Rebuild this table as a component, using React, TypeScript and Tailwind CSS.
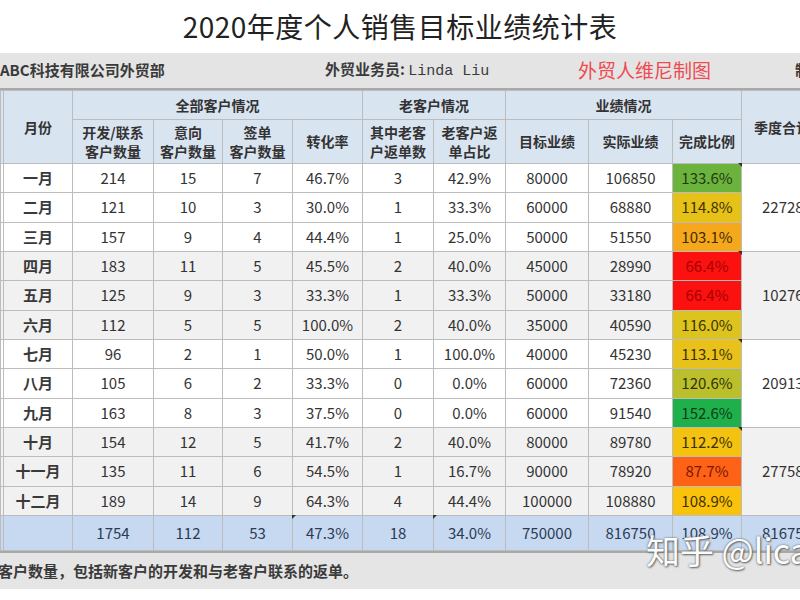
import React from 'react';

type Row = {
  month: string;
  dev: number;
  intent: number;
  signed: number;
  rate: string;
  back: number;
  backRate: string;
  target: number;
  actual: number;
  done: string;
  doneBg: string;
  doneText: string;
};

const ROWS: Row[] = [
  { month: '一月', dev: 214, intent: 15, signed: 7, rate: '46.7%', back: 3, backRate: '42.9%', target: 80000, actual: 106850, done: '133.6%', doneBg: 'bg-[#6cb33e]', doneText: 'text-[#1f3a10]' },
  { month: '二月', dev: 121, intent: 10, signed: 3, rate: '30.0%', back: 1, backRate: '33.3%', target: 60000, actual: 68880, done: '114.8%', doneBg: 'bg-[#e6c118]', doneText: 'text-[#3d3200]' },
  { month: '三月', dev: 157, intent: 9, signed: 4, rate: '44.4%', back: 1, backRate: '25.0%', target: 50000, actual: 51550, done: '103.1%', doneBg: 'bg-[#f6a81c]', doneText: 'text-[#3d2a00]' },
  { month: '四月', dev: 183, intent: 11, signed: 5, rate: '45.5%', back: 2, backRate: '40.0%', target: 45000, actual: 28990, done: '66.4%', doneBg: 'bg-[#fb1210]', doneText: 'text-[#a50000]' },
  { month: '五月', dev: 125, intent: 9, signed: 3, rate: '33.3%', back: 1, backRate: '33.3%', target: 50000, actual: 33180, done: '66.4%', doneBg: 'bg-[#fb1210]', doneText: 'text-[#a50000]' },
  { month: '六月', dev: 112, intent: 5, signed: 5, rate: '100.0%', back: 2, backRate: '40.0%', target: 35000, actual: 40590, done: '116.0%', doneBg: 'bg-[#dcc31e]', doneText: 'text-[#3d3500]' },
  { month: '七月', dev: 96, intent: 2, signed: 1, rate: '50.0%', back: 1, backRate: '100.0%', target: 40000, actual: 45230, done: '113.1%', doneBg: 'bg-[#e8c11a]', doneText: 'text-[#3d3200]' },
  { month: '八月', dev: 105, intent: 6, signed: 2, rate: '33.3%', back: 0, backRate: '0.0%', target: 60000, actual: 72360, done: '120.6%', doneBg: 'bg-[#bcbf2c]', doneText: 'text-[#30330a]' },
  { month: '九月', dev: 163, intent: 8, signed: 3, rate: '37.5%', back: 0, backRate: '0.0%', target: 60000, actual: 91540, done: '152.6%', doneBg: 'bg-[#1fb04c]', doneText: 'text-[#0d3d1a]' },
  { month: '十月', dev: 154, intent: 12, signed: 5, rate: '41.7%', back: 2, backRate: '40.0%', target: 80000, actual: 89780, done: '112.2%', doneBg: 'bg-[#f4c210]', doneText: 'text-[#3d3000]' },
  { month: '十一月', dev: 135, intent: 11, signed: 6, rate: '54.5%', back: 1, backRate: '16.7%', target: 90000, actual: 78920, done: '87.7%', doneBg: 'bg-[#fe6216]', doneText: 'text-[#7a1600]' },
  { month: '十二月', dev: 189, intent: 14, signed: 9, rate: '64.3%', back: 4, backRate: '44.4%', target: 100000, actual: 108880, done: '108.9%', doneBg: 'bg-[#fbc20c]', doneText: 'text-[#3d3000]' },
];

const QUARTERS = ['227280', '102760', '209130', '277580'];

const cell = 'border border-[#bcbcbc] text-center align-middle p-0';
const head = `${cell} bg-[#d9e4f1] font-bold text-[#333] text-[14px] leading-[19px]`;

export default function App() {
  return (
    <div className="relative w-[800px] h-[600px] overflow-hidden bg-white font-['Noto_Sans_CJK_SC',sans-serif] text-[#333]">
      <div className="h-[53px] flex items-center justify-center pb-[2px]">
        <h1 className="text-[28px] text-[#222] leading-none tracking-[0.5px]">2020年度个人销售目标业绩统计表</h1>
      </div>

      <div className="h-[37px] bg-[#e4e4e4] border-b-2 border-[#a8a8a8] flex items-center whitespace-nowrap">
        <div className="w-[325px] shrink-0 text-[15px] font-bold text-[#3a3a3a]">ABC科技有限公司外贸部</div>
        <div className="w-[253px] shrink-0 text-[15px] font-bold text-[#3a3a3a]">
          外贸业务员: <span className="font-['Liberation_Mono',monospace] font-normal">Linda Liu</span>
        </div>
        <div className="w-[217px] shrink-0 text-[19px] text-[#ef4a52]">外贸人维尼制图</div>
        <div className="shrink-0 text-[15px] font-bold text-[#3a3a3a]">制表日期</div>
      </div>

      <table className="table-fixed border-collapse w-[829px] text-[15px]">
        <colgroup>
          <col className="w-[3px]" />
          <col className="w-[69px]" />
          <col className="w-[81px]" />
          <col className="w-[69px]" />
          <col className="w-[70px]" />
          <col className="w-[70px]" />
          <col className="w-[71px]" />
          <col className="w-[72px]" />
          <col className="w-[83px]" />
          <col className="w-[84px]" />
          <col className="w-[69px]" />
          <col className="w-[88px]" />
        </colgroup>
        <thead>
          <tr className="h-[29px]">
            <th rowSpan={2} className={head}></th>
            <th rowSpan={2} className={head}>月份</th>
            <th colSpan={4} className={head}>全部客户情况</th>
            <th colSpan={2} className={head}>老客户情况</th>
            <th colSpan={3} className={head}>业绩情况</th>
            <th rowSpan={2} className={`${head} text-left pl-[12px]`}>季度合计</th>
          </tr>
          <tr className="h-[44px]">
            <th className={head}>开发/联系<br />客户数量</th>
            <th className={head}>意向<br />客户数量</th>
            <th className={head}>签单<br />客户数量</th>
            <th className={head}>转化率</th>
            <th className={head}>其中老客<br />户返单数</th>
            <th className={head}>老客户返<br />单占比</th>
            <th className={head}>目标业绩</th>
            <th className={head}>实际业绩</th>
            <th className={head}>完成比例</th>
          </tr>
        </thead>
        <tbody>
          {ROWS.map((r, i) => {
            const q = Math.floor(i / 3);
            const bg = q % 2 === 1 ? 'bg-[#f1f1f1]' : 'bg-white';
            return (
              <tr key={r.month} className={`h-[29.33px] ${bg}`}>
                <td className={cell}></td>
                <td className={`${cell} font-bold text-[#3a3a3a]`}>{r.month}</td>
                <td className={cell}>{r.dev}</td>
                <td className={cell}>{r.intent}</td>
                <td className={cell}>{r.signed}</td>
                <td className={cell}>{r.rate}</td>
                <td className={cell}>{r.back}</td>
                <td className={cell}>{r.backRate}</td>
                <td className={cell}>{r.target}</td>
                <td className={cell}>{r.actual}</td>
                <td className={`${cell} relative ${r.doneBg} ${r.doneText}`}>
                  {r.done}
                  {i % 3 === 0 && (
                    <span className="absolute right-[-1px] top-[-1px] w-0 h-0 border-l-[4px] border-l-transparent border-t-[4px] border-t-[#333]" />
                  )}
                </td>
                {i % 3 === 0 && (
                  <td rowSpan={3} className={`${cell} text-left pl-[20px]`}>{QUARTERS[q]}</td>
                )}
              </tr>
            );
          })}
          <tr className="h-[35px] bg-[#c6d9f0] text-[#2b3a55]">
            <td className={cell}></td>
            <td className={cell}></td>
            <td className={cell}>1754</td>
            <td className={cell}>112</td>
            <td className={cell}>53</td>
            <td className={`${cell} relative`}>
              47.3%
              <span className="absolute left-[-1px] top-[-1px] w-0 h-0 border-r-[4px] border-r-transparent border-t-[4px] border-t-[#333]" />
            </td>
            <td className={cell}>18</td>
            <td className={`${cell} relative`}>
              34.0%
              <span className="absolute left-[-1px] top-[-1px] w-0 h-0 border-r-[4px] border-r-transparent border-t-[4px] border-t-[#333]" />
            </td>
            <td className={cell}>750000</td>
            <td className={cell}>816750</td>
            <td className={cell}>108.9%</td>
            <td className={`${cell} text-left pl-[20px]`}>816750</td>
          </tr>
        </tbody>
      </table>

      <div className="h-[38px] bg-[#e5e5e5] border-t-2 border-[#a8a8a8] flex items-center whitespace-nowrap -ml-[2px]">
        <span className="text-[15px] font-bold text-[#3a3a3a]">客户数量，包括新客户的开发和与老客户联系的返单。</span>
      </div>

      <div className="absolute left-[646px] top-[533px] whitespace-nowrap text-[34px] text-white leading-none [text-shadow:0_0_2px_#555,1px_1px_2px_#666] opacity-95">
        知乎 @lica
      </div>
    </div>
  );
}
